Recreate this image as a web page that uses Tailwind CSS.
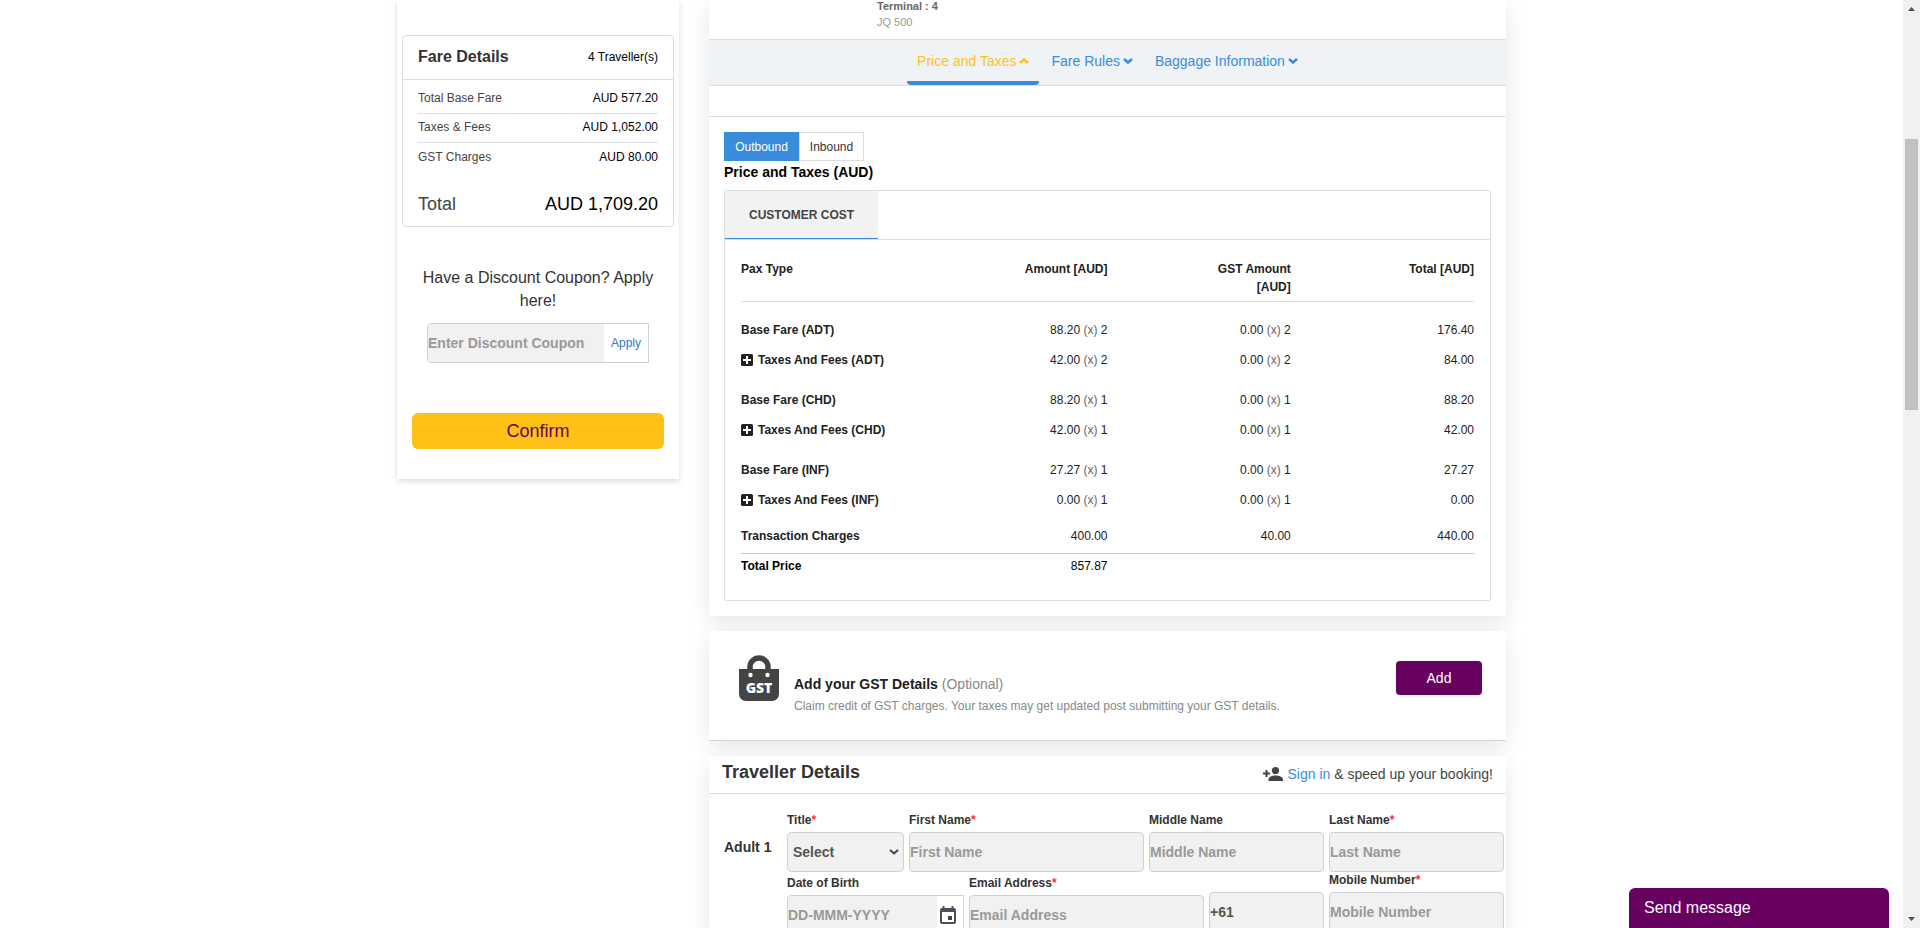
<!DOCTYPE html>
<html lang="en">
<head>
<meta charset="utf-8">
<title>Review fare and traveller details</title>
<script src="https://cdn.jsdelivr.net/npm/@tailwindcss/browser@4"></script>
</head>
<body class="h-screen overflow-hidden bg-white font-['Liberation_Sans',Arial,sans-serif] text-xs text-[#212121]">
<div class="flex h-full">
<div class="min-w-0 flex-1 overflow-hidden">
<div class="mx-auto flex max-w-[1109px] items-start gap-[30px]">

  <!-- Fare summary -->
  <aside class="w-[282px] shrink-0 bg-white px-[5px] pt-[35px] pb-[30px] shadow-[0_2px_6px_rgba(0,0,0,0.15)]">
    <section class="rounded border border-[#dcdde0]">
      <div class="flex h-11 items-center justify-between border-b border-[#dcdde0] px-[15px] pb-0.5">
        <h2 class="text-base font-bold text-[#333]">Fare Details</h2>
        <span class="text-black">4 Traveller(s)</span>
      </div>
      <dl class="px-[15px] pt-1">
        <div class="flex h-[30px] items-center justify-between border-b border-[#dcdde0] pb-0.5"><dt class="text-[#444]">Total Base Fare</dt><dd class="text-black">AUD 577.20</dd></div>
        <div class="flex h-[29px] items-center justify-between border-b border-[#dcdde0] pb-0.5"><dt class="text-[#444]">Taxes &amp; Fees</dt><dd class="text-black">AUD 1,052.00</dd></div>
        <div class="flex h-[29px] items-center justify-between pb-0.5"><dt class="text-[#444]">GST Charges</dt><dd class="text-black">AUD 80.00</dd></div>
        <div class="mt-3 flex h-[42px] items-center justify-between pb-0.5 text-lg"><dt class="text-[#444]">Total</dt><dd class="text-black">AUD 1,709.20</dd></div>
      </dl>
    </section>
    <form class="px-[10px] pt-[39px]">
      <label for="coupon" class="block text-center text-base leading-[23px] text-[#333]">Have a Discount Coupon? Apply<br>here!</label>
      <div class="mx-[15px] mt-[11px] flex h-10 rounded-l border border-[#ced0d9]">
        <input id="coupon" type="text" placeholder="Enter Discount Coupon" class="min-w-0 flex-1 rounded-l bg-[#f1f1f1] text-sm font-bold outline-none placeholder:text-[#999]">
        <button type="button" class="w-11 bg-white text-xs text-[#337ab7]">Apply</button>
      </div>
      <button type="button" class="mt-[50px] h-9 w-full rounded-md bg-[#ffc116] text-lg text-[#68005f]">Confirm</button>
    </form>
  </aside>

  <main class="min-w-0 flex-1">
    <!-- Itinerary and pricing -->
    <section class="bg-white shadow-[0_6px_20px_rgba(0,0,0,0.1)]">
      <div class="flow-root h-[39px] pl-[168px] text-[11px] leading-4">
        <p class="-mt-0.5 font-bold text-[#666]">Terminal : 4</p>
        <p class="text-[#999]">JQ 500</p>
      </div>
      <nav class="flex h-[47px] justify-center border-y border-[#dcdddf] bg-[#eff3f6] text-sm text-[#398bdc]">
        <a href="#price" class="flex items-center gap-[3px] rounded-b border-b-4 border-[#398bdc] px-2.5 text-[#ffc116]">Price and Taxes
          <svg class="h-1.5 w-2.5" viewBox="0 0 10 6" fill="none" stroke="currentColor" stroke-width="2.500"><path d="M1 5l4-3.500L9 5"/></svg></a>
        <a href="#rules" class="flex items-center gap-[3px] border-b-4 border-transparent px-3">Fare Rules
          <svg class="h-1.5 w-2.5" viewBox="0 0 10 6" fill="none" stroke="currentColor" stroke-width="2.500"><path d="M1 1l4 3.500L9 1"/></svg></a>
        <a href="#baggage" class="flex items-center gap-[3px] border-b-4 border-transparent px-2.5">Baggage Information
          <svg class="h-1.5 w-2.5" viewBox="0 0 10 6" fill="none" stroke="currentColor" stroke-width="2.500"><path d="M1 1l4 3.500L9 1"/></svg></a>
      </nav>
      <div class="h-[31px] border-b border-[#dcdddf]"></div>
      <div id="price" class="px-[15px] pt-[15px] pb-[15px]">
        <div class="flex h-[29px]">
          <button type="button" class="w-[75px] bg-[#398bdc] text-white">Outbound</button>
          <button type="button" class="w-[65px] border border-[#dcdddf] bg-white text-[#333]">Inbound</button>
        </div>
        <h3 class="mt-px text-sm leading-5 font-bold text-black">Price and Taxes (AUD)</h3>
        <div class="mt-2 rounded-xs border border-[#dcdddf]">
          <div class="flex border-b border-[#dcdddf]">
            <button type="button" class="h-12 border-b border-[#398bdc] bg-[#f2f2f2] px-6 font-bold text-[#444]">CUSTOMER COST</button>
          </div>
          <div class="px-4 pt-5 pb-[21px]">
            <table class="w-full table-fixed text-right">
              <thead class="align-top leading-[18px]">
                <tr class="h-[41px] border-b border-[#dcdddf]"><th class="text-left">Pax Type</th><th>Amount [AUD]</th><th>GST Amount<br>[AUD]</th><th>Total [AUD]</th></tr>
              </thead>
              <tbody>
                <tr class="h-11"><th class="pt-[13px] text-left">Base Fare (ADT)</th><td class="pt-[13px]">88.20 <span class="text-[#666]">(x)</span> 2</td><td class="pt-[13px]">0.00 <span class="text-[#666]">(x)</span> 2</td><td class="pt-[13px]">176.40</td></tr>
                <tr class="h-[30px]"><th class="text-left"><button type="button" class="flex items-center gap-[5px] font-bold"><svg class="h-3 w-3" viewBox="0 0 12 12"><rect width="12" height="12" rx="1.500" fill="#212121"/><path d="M6 2v8M2 6h8" stroke="#fff" stroke-width="2"/></svg>Taxes And Fees (ADT)</button></th><td>42.00 <span class="text-[#666]">(x)</span> 2</td><td>0.00 <span class="text-[#666]">(x)</span> 2</td><td>84.00</td></tr>
                <tr class="h-10"><th class="pt-[9px] text-left">Base Fare (CHD)</th><td class="pt-[9px]">88.20 <span class="text-[#666]">(x)</span> 1</td><td class="pt-[9px]">0.00 <span class="text-[#666]">(x)</span> 1</td><td class="pt-[9px]">88.20</td></tr>
                <tr class="h-[30px]"><th class="text-left"><button type="button" class="flex items-center gap-[5px] font-bold"><svg class="h-3 w-3" viewBox="0 0 12 12"><rect width="12" height="12" rx="1.500" fill="#212121"/><path d="M6 2v8M2 6h8" stroke="#fff" stroke-width="2"/></svg>Taxes And Fees (CHD)</button></th><td>42.00 <span class="text-[#666]">(x)</span> 1</td><td>0.00 <span class="text-[#666]">(x)</span> 1</td><td>42.00</td></tr>
                <tr class="h-10"><th class="pt-[9px] text-left">Base Fare (INF)</th><td class="pt-[9px]">27.27 <span class="text-[#666]">(x)</span> 1</td><td class="pt-[9px]">0.00 <span class="text-[#666]">(x)</span> 1</td><td class="pt-[9px]">27.27</td></tr>
                <tr class="h-[30px]"><th class="text-left"><button type="button" class="flex items-center gap-[5px] font-bold"><svg class="h-3 w-3" viewBox="0 0 12 12"><rect width="12" height="12" rx="1.500" fill="#212121"/><path d="M6 2v8M2 6h8" stroke="#fff" stroke-width="2"/></svg>Taxes And Fees (INF)</button></th><td>0.00 <span class="text-[#666]">(x)</span> 1</td><td>0.00 <span class="text-[#666]">(x)</span> 1</td><td>0.00</td></tr>
                <tr class="h-[38px]"><th class="pt-1 text-left">Transaction Charges</th><td class="pt-1">400.00</td><td class="pt-1">40.00</td><td class="pt-1">440.00</td></tr>
              </tbody>
              <tfoot class="border-t border-[#c8c8c8] text-black">
                <tr class="h-[26px]"><th class="text-left">Total Price</th><td>857.87</td><td></td><td></td></tr>
              </tfoot>
            </table>
          </div>
        </div>
      </div>
    </section>

    <!-- GST details -->
    <section class="mt-[15px] flex h-[110px] items-start border-b border-[#d5d6d8] bg-white px-6 shadow-[0_6px_20px_rgba(0,0,0,0.1)]">
      <svg class="mt-6 ml-1.5 h-[46px] w-10 shrink-0" viewBox="0 0 40 46">
        <path d="M11 17V12a9 9 0 0 1 18 0v5" fill="none" stroke="#444" stroke-width="5.500"/>
        <path d="M0 14h40v25a7 7 0 0 1-7 7H7a7 7 0 0 1-7-7z" fill="#444"/>
        <circle cx="11.500" cy="20" r="2.200" fill="#fff"/><circle cx="28.500" cy="20" r="2.200" fill="#fff"/>
        <text x="20" y="38" text-anchor="middle" font-family="Open Sans, Noto Sans, sans-serif" font-weight="800" font-size="14" fill="#fff">GST</text>
      </svg>
      <div class="ml-[15px] flex-1 pt-[42px]">
        <h3 class="text-sm leading-[22px] font-bold">Add your GST Details <span class="font-normal text-[#888]">(Optional)</span></h3>
        <p class="leading-[22px] text-[#888]">Claim credit of GST charges. Your taxes may get updated post submitting your GST details.</p>
      </div>
      <button type="button" class="mt-[30px] h-[34px] w-[86px] rounded bg-[#68005f] text-sm text-white">Add</button>
    </section>

    <!-- Traveller form -->
    <section class="mt-[15px] rounded-t bg-white shadow-[0_6px_20px_rgba(0,0,0,0.1)]">
      <header class="flex h-[38px] items-center justify-between border-b border-[#dcdddf] px-[13px]">
        <h2 class="pb-1.5 text-lg font-bold text-[#333]">Traveller Details</h2>
        <p class="flex items-center pb-0.5 text-sm text-[#444]">
          <svg class="mr-[5px] h-3.5 w-5" viewBox="0 0 20 14" fill="#444"><circle cx="12.500" cy="3.600" r="3.600"/><path d="M5.500 14v-1.500c0-3 4.500-4 7.250-4s7.250 1 7.250 4V14zM2.500 3h2v2.500H7v2H4.500V10h-2V7.500H0v-2h2.500z"/></svg>
          <span><a href="#signin" class="text-[#398bdc]">Sign in</a> &amp; speed up your booking!</span></p>
      </header>
      <form class="flex pt-[17px] pr-0.5 pl-[15px] font-bold text-[#333]">
        <h3 class="w-[63px] shrink-0 pt-[26px] text-sm">Adult 1</h3>
        <div class="min-w-0 flex-1">
          <div class="grid grid-cols-[117fr_235fr_175fr_175fr] gap-x-[5px] leading-[18px]">
            <div><label for="title">Title<span class="text-red-500">*</span></label>
              <div class="relative mt-[3px]">
                <select id="title" class="block h-10 w-full appearance-none rounded border border-[#ced0d9] bg-[#f1f1f1] pl-[5px] text-sm font-bold text-[#555]"><option>Select</option></select>
                <svg class="pointer-events-none absolute top-[17px] right-[5px] h-1.5 w-2.5" viewBox="0 0 10 6" fill="none" stroke="#444" stroke-width="2"><path d="M1 1l4 3.500L9 1"/></svg>
              </div></div>
            <div><label for="first">First Name<span class="text-red-500">*</span></label><input id="first" placeholder="First Name" class="mt-[3px] block h-10 w-full rounded border border-[#ced0d9] bg-[#f1f1f1] text-sm font-bold placeholder:text-[#999]"></div>
            <div><label for="middle">Middle Name</label><input id="middle" placeholder="Middle Name" class="mt-[3px] block h-10 w-full rounded border border-[#ced0d9] bg-[#f1f1f1] text-sm font-bold placeholder:text-[#999]"></div>
            <div><label for="last">Last Name<span class="text-red-500">*</span></label><input id="last" placeholder="Last Name" class="mt-[3px] block h-10 w-full rounded border border-[#ced0d9] bg-[#f1f1f1] text-sm font-bold placeholder:text-[#999]"></div>
          </div>
          <div class="grid grid-cols-[177fr_235fr_115fr_175fr] items-start gap-x-[5px] leading-[18px]">
            <div class="min-w-0 pt-0.5"><label for="dob">Date of Birth</label>
              <div class="mt-[3px] flex h-10 rounded-l border border-[#ced0d9]">
                <input id="dob" placeholder="DD-MMM-YYYY" class="min-w-0 flex-1 rounded-l bg-[#f1f1f1] text-sm font-bold placeholder:text-[#999]">
                <button type="button" aria-label="Open calendar" class="flex w-[26px] shrink-0 pt-2.5 pl-[3px]"><svg class="h-[18px] w-4" viewBox="0 0 16 18"><path d="M2.500 0h2v2h7V0h2v2H14a2 2 0 0 1 2 2v12a2 2 0 0 1-2 2H2a2 2 0 0 1-2-2V4a2 2 0 0 1 2-2h.5zM2 6v10h12V6z" fill="#495057"/><rect x="8" y="10" width="4" height="4" fill="#444"/></svg></button>
              </div></div>
            <div class="min-w-0 pt-0.5"><label for="email">Email Address<span class="text-red-500">*</span></label><input id="email" type="email" placeholder="Email Address" class="mt-[3px] block h-10 w-full rounded border border-[#ced0d9] bg-[#f1f1f1] text-sm font-bold placeholder:text-[#999]"></div>
            <div class="min-w-0 pt-5"><input id="code" aria-label="Country code" value="+61" class="block h-10 w-full rounded border border-[#ced0d9] bg-[#f1f1f1] text-sm font-bold text-[#555]"></div>
            <div class="min-w-0"><label for="mobile" class="block leading-4">Mobile Number<span class="text-red-500">*</span></label><input id="mobile" type="tel" placeholder="Mobile Number" class="mt-1 block h-10 w-full rounded border border-[#ced0d9] bg-[#f1f1f1] text-sm font-bold placeholder:text-[#999]"></div>
          </div>
        </div>
      </form>
    </section>
  </main>
</div>
</div>

<!-- Scroll track -->
<div class="flex w-[17px] shrink-0 flex-col items-center justify-between bg-[#f1f1f1] py-1.5" aria-hidden="true">
  <svg class="h-1.5 w-[7px]" viewBox="0 0 7 6" fill="#505050"><path d="M0 5l3.500-4L7 5z"/></svg>
  <div class="mt-[127px] mb-auto h-[271px] w-[13px] bg-[#c1c1c1]"></div>
  <svg class="h-1.5 w-[7px]" viewBox="0 0 7 6" fill="#505050"><path d="M0 1l3.500 4L7 1z"/></svg>
</div>
</div>

<button type="button" class="fixed right-[31px] bottom-0 h-10 w-[260px] rounded-t-md bg-[#68005f] px-[15px] text-left text-base text-white">Send message</button>
</body>
</html>
